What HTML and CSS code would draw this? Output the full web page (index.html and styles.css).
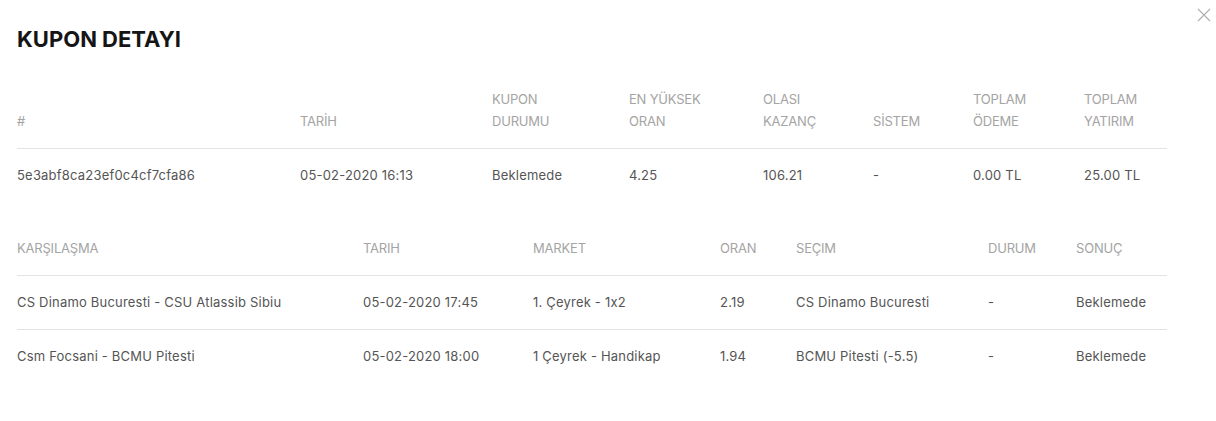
FILE: index.html
```html
<!DOCTYPE html>
<html lang="tr">
<head>
<meta charset="utf-8">
<title>Kupon Detayı</title>
<link rel="stylesheet" href="styles.css">
</head>
<body>
<div class="modal">
  <button class="close" aria-label="Kapat">
    <svg width="14" height="14" viewBox="0 0 14 14"><path d="M1 1L13 13M13 1L1 13" stroke="#b0b0b0" stroke-width="1.2" fill="none"/></svg>
  </button>
  <h1 class="title">KUPON DETAYI</h1>
  <table class="tbl tbl-coupon">
    <colgroup>
      <col style="width:283px"><col style="width:192px"><col style="width:137px"><col style="width:134px"><col style="width:110px"><col style="width:100px"><col style="width:111px"><col style="width:83px">
    </colgroup>
    <thead>
      <tr>
        <th>#</th><th>TARİH</th><th>KUPON<br>DURUMU</th><th>EN YÜKSEK<br>ORAN</th><th>OLASI<br>KAZANÇ</th><th>SİSTEM</th><th>TOPLAM<br>ÖDEME</th><th>TOPLAM<br>YATIRIM</th>
      </tr>
    </thead>
    <tbody>
      <tr>
        <td>5e3abf8ca23ef0c4cf7cfa86</td><td>05-02-2020 16:13</td><td>Beklemede</td><td>4.25</td><td>106.21</td><td>-</td><td>0.00 TL</td><td>25.00 TL</td>
      </tr>
    </tbody>
  </table>
  <table class="tbl tbl-matches">
    <colgroup>
      <col style="width:346px"><col style="width:170px"><col style="width:187px"><col style="width:76px"><col style="width:192px"><col style="width:88px"><col style="width:91px">
    </colgroup>
    <thead>
      <tr>
        <th>KARŞILAŞMA</th><th>TARIH</th><th>MARKET</th><th>ORAN</th><th>SEÇIM</th><th>DURUM</th><th>SONUÇ</th>
      </tr>
    </thead>
    <tbody>
      <tr>
        <td>CS Dinamo Bucuresti - CSU Atlassib Sibiu</td><td>05-02-2020 17:45</td><td>1. Çeyrek - 1x2</td><td>2.19</td><td>CS Dinamo Bucuresti</td><td>-</td><td>Beklemede</td>
      </tr>
      <tr>
        <td>Csm Focsani - BCMU Pitesti</td><td>05-02-2020 18:00</td><td>1 Çeyrek - Handikap</td><td>1.94</td><td>BCMU Pitesti (-5.5)</td><td>-</td><td>Beklemede</td>
      </tr>
    </tbody>
  </table>
</div>
</body>
</html>
```
FILE: styles.css
```css
html, body {
  margin: 0;
  padding: 0;
  background: #ffffff;
}
body {
  font-family: "Inter", "Noto Sans", sans-serif;
  font-size: 13px;
  color: #555555;
  font-feature-settings: "calt" 0;
}
.modal {
  position: relative;
  padding: 24px 49px 0 17px;
}
.close {
  position: absolute;
  top: 8px;
  right: 5px;
  width: 14px;
  height: 14px;
  padding: 0;
  border: 0;
  background: none;
  cursor: pointer;
}
.close svg { display: block; }
.title {
  margin: 0 0 18px 0;
  font-size: 22px;
  line-height: 30px;
  font-weight: 700;
  color: #151515;
  letter-spacing: 0;
}
.tbl {
  width: 1150px;
  border-collapse: collapse;
  table-layout: fixed;
}
.tbl th, .tbl td {
  text-align: left;
  padding: 16px 10px 16px 0;
  line-height: 22px;
  vertical-align: bottom;
}
.tbl th {
  font-weight: 400;
  color: #a4a4a4;
  letter-spacing: -0.2px;
  border-bottom: 1px solid #e3e3e3;
}
.tbl td {
  padding-top: 15px;
  padding-bottom: 16px;
  color: #555555;
  letter-spacing: 0.2px;
  white-space: nowrap;
}
.tbl-matches {
  margin-top: 19px;
}
.tbl-matches tbody tr:first-child td {
  border-bottom: 1px solid #e3e3e3;
}
```
